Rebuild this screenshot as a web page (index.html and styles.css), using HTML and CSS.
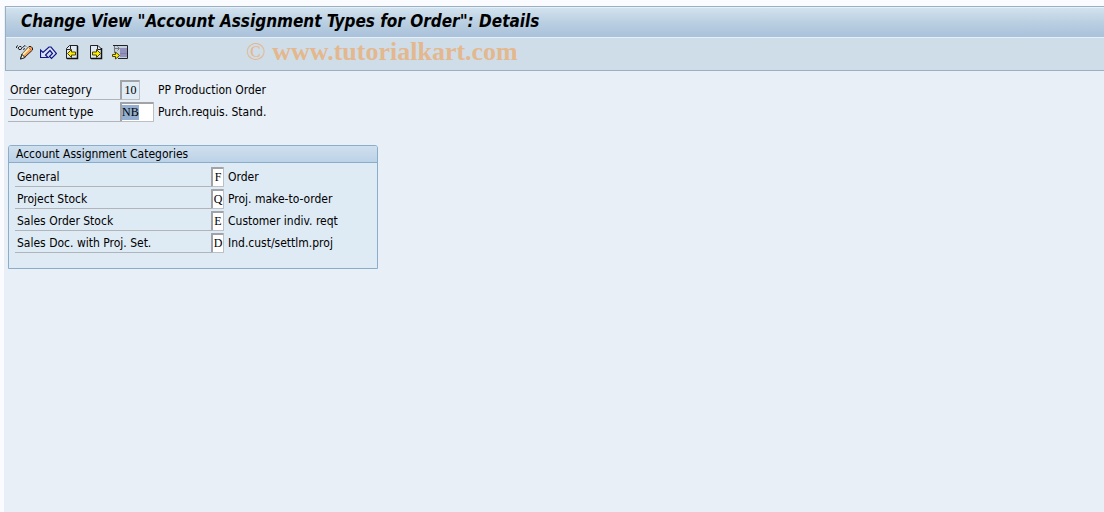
FILE: index.html
```html
<!DOCTYPE html>
<html lang="en">
<head>
    <meta charset="UTF-8">
    <title>Change View "Account Assignment Types for Order": Details</title>
    <link rel="stylesheet" href="styles.css">
</head>
<body>
    <div class="window">
        <header class="header">
            <h1>Change View "Account Assignment Types for Order": Details</h1>
            <div class="toolbar">
                <button type="button" aria-label="Display / Change">
                    <svg viewBox="0 0 17 16">
                        <path d="M.5 4V2.500L2 1.500M3 5.500h2l1-2-1-1H3.500L2 4zM6.500 3.500L9 1.500l1 1M7 5.500l2-1" fill="none" stroke="#222"/>
                        <path d="M6 10l7-7.500h2l1.500 1.500v2l-8 7.500-4 1.500z" fill="#f0a050" stroke="#222"/>
                        <path d="M7 10.500L13.500 4" stroke="#ffe8a8" stroke-width="2"/>
                        <path d="M13 4l2.500 2.500" stroke="#e06040"/>
                        <path d="M4.500 15l1.500-4.500 3 3z" fill="#fff" stroke="#222"/>
                    </svg>
                </button>
                <button type="button" aria-label="Undo">
                    <svg viewBox="0 0 17 16">
                        <path d="M.5 6v7.500H8L5.500 11l4.500-4.500 2.500 3-3 3 2 2 5-5L11 3H9L3 8.500z" fill="#dbe6f4" stroke="#14148c" stroke-width="1.200"/>
                    </svg>
                </button>
                <button type="button" aria-label="Previous entry">
                    <svg viewBox="0 0 17 16">
                        <path d="M5.500 1.500h8v13h-11v-10z" fill="#dfe8f5" stroke="#222"/>
                        <path d="M13.500 2v12.500H3" fill="none" stroke="#111" stroke-width="1.500"/>
                        <path d="M2.500 5.500h4V2" fill="none" stroke="#222"/>
                        <path d="M3.500 9.500l4-4v2.500h4v3h-4v2.500z" fill="#ffee00" stroke="#4a4400"/>
                    </svg>
                </button>
                <button type="button" aria-label="Next entry">
                    <svg viewBox="0 0 17 16">
                        <path d="M2.500 1.500H10l3.500 3.500v9.500h-11z" fill="#dfe8f5" stroke="#222"/>
                        <path d="M13.500 4v10.500H3" fill="none" stroke="#111" stroke-width="1.500"/>
                        <path d="M9.500 1v4.500H13" fill="none" stroke="#222"/>
                        <path d="M12.500 9.500l-4-4v2.500h-4v3h4v2.500z" fill="#ffee00" stroke="#4a4400"/>
                    </svg>
                </button>
                <button type="button" aria-label="Other entry">
                    <svg viewBox="0 0 17 16">
                        <path d="M1.500 1.500h14v13h-14z" fill="#c3d0df"/>
                        <path d="M8 4h7v9H8z" fill="#9292bd"/>
                        <path d="M1 1.500h14.500v13H6" fill="none" stroke="#222"/>
                        <path d="M8 9.500h7" stroke="#7f7fae"/>
                        <path d="M2.500 2v7M3 4.500h4M5.500 2.500l2 2-2 2" fill="none" stroke="#777"/>
                        <path d="M.5 10.500h3V8l4 3.500-4 3.500v-2.500h-3z" fill="#ffee00" stroke="#4a4400"/>
                    </svg>
                </button>
                <span class="watermark"><span class="copy">©</span> www.tutorialkart.com</span>
            </div>
        </header>

        <form class="content">
            <div class="row">
                <label for="category">Order category</label>
                <input id="category" class="two" value="10" readonly>
                <span class="text">PP Production Order</span>
            </div>
            <div class="row">
                <label for="doctype">Document type</label>
                <input id="doctype" class="four marked" value="NB">
                <span class="text">Purch.requis. Stand.</span>
            </div>

            <section class="group">
                <h2>Account Assignment Categories</h2>
                <div class="fields">
                    <div class="row">
                        <label for="general">General</label>
                        <input id="general" value="F">
                        <span class="text">Order</span>
                    </div>
                    <div class="row">
                        <label for="project">Project Stock</label>
                        <input id="project" value="Q">
                        <span class="text">Proj. make-to-order</span>
                    </div>
                    <div class="row">
                        <label for="sales">Sales Order Stock</label>
                        <input id="sales" value="E">
                        <span class="text">Customer indiv. reqt</span>
                    </div>
                    <div class="row">
                        <label for="salesdoc">Sales Doc. with Proj. Set.</label>
                        <input id="salesdoc" value="D">
                        <span class="text">Ind.cust/settlm.proj</span>
                    </div>
                </div>
            </section>
        </form>
    </div>
</body>
</html>
```
FILE: styles.css
```css
* { box-sizing: border-box; }
body { margin: 0; background: #fafbfe; font: 12px/18px "DejaVu Sans Condensed", "DejaVu Sans", sans-serif; color: #000; }
.window { min-height: 100vh; margin-left: 4px; padding-top: 6px; background: linear-gradient(#fafbfe 6px, #e8eff7 6px); }

.header { margin-left: 1px; border: solid #9bafc2; border-width: 1px 0 1px 1px; background: #cfdde8; }
h1 { margin: 0; padding: 0 15px; font-size: 17px; line-height: 26px; height: 31px; font-style: italic; border: solid #e6f0f8; border-width: 1px 0; background: linear-gradient(#d2e2ee, #bacfe1 50%, #a9c1db); }
.toolbar { display: flex; align-items: center; gap: 7px; height: 32px; padding: 0 10px 4px; }
.toolbar button { display: flex; padding: 0; border: 0; background: none; cursor: pointer; }
.toolbar svg { width: 17px; height: 16px; }
.watermark { margin-left: 110px; font: bold 26px/30px "Liberation Serif", serif; color: #e4b88e; }
.copy { font-weight: normal; }

.content { padding: 7px 4px; }
.row { display: flex; align-items: flex-end; height: 22px; }
.row label { width: 112px; height: 20px; padding: 0 2px; line-height: 20px; border-bottom: 1px solid #b1b5ba; white-space: nowrap; }
.row input { width: 13px; height: 20px; padding: 0; font: 12px "Liberation Serif", serif; text-align: center; color: #000; border: 1px solid #bcc0c5; border-top: 2px solid #a0a3a8; border-left: 2px solid #a0a3a8; border-radius: 1px; background: #fff; outline: none; }
.row .two { width: 20px; background: #dfebf5; }
.row .four { width: 34px; text-align: left; }
.row .marked { background: linear-gradient(#94afcf, #94afcf) 0 1px / 17px 15px no-repeat #fff; }
.row .text { line-height: 20px; padding-left: 4px; white-space: nowrap; }
.row .two + .text { padding-left: 18px; }

.group { max-width: 370px; margin-top: 23px; border: 1px solid #8badcc; border-radius: 3px 3px 0 0; background: #deeaf4; }
h2 { margin: 0; padding: 0 7px; font-size: 12px; font-weight: normal; line-height: 16px; border-bottom: 1px solid #8badcc; border-radius: 2px 2px 0 0; background: linear-gradient(#cfe0ef, #bcd2e7); }
.fields { padding: 2px 6px 15px; }
.fields label { width: 196px; }
```
